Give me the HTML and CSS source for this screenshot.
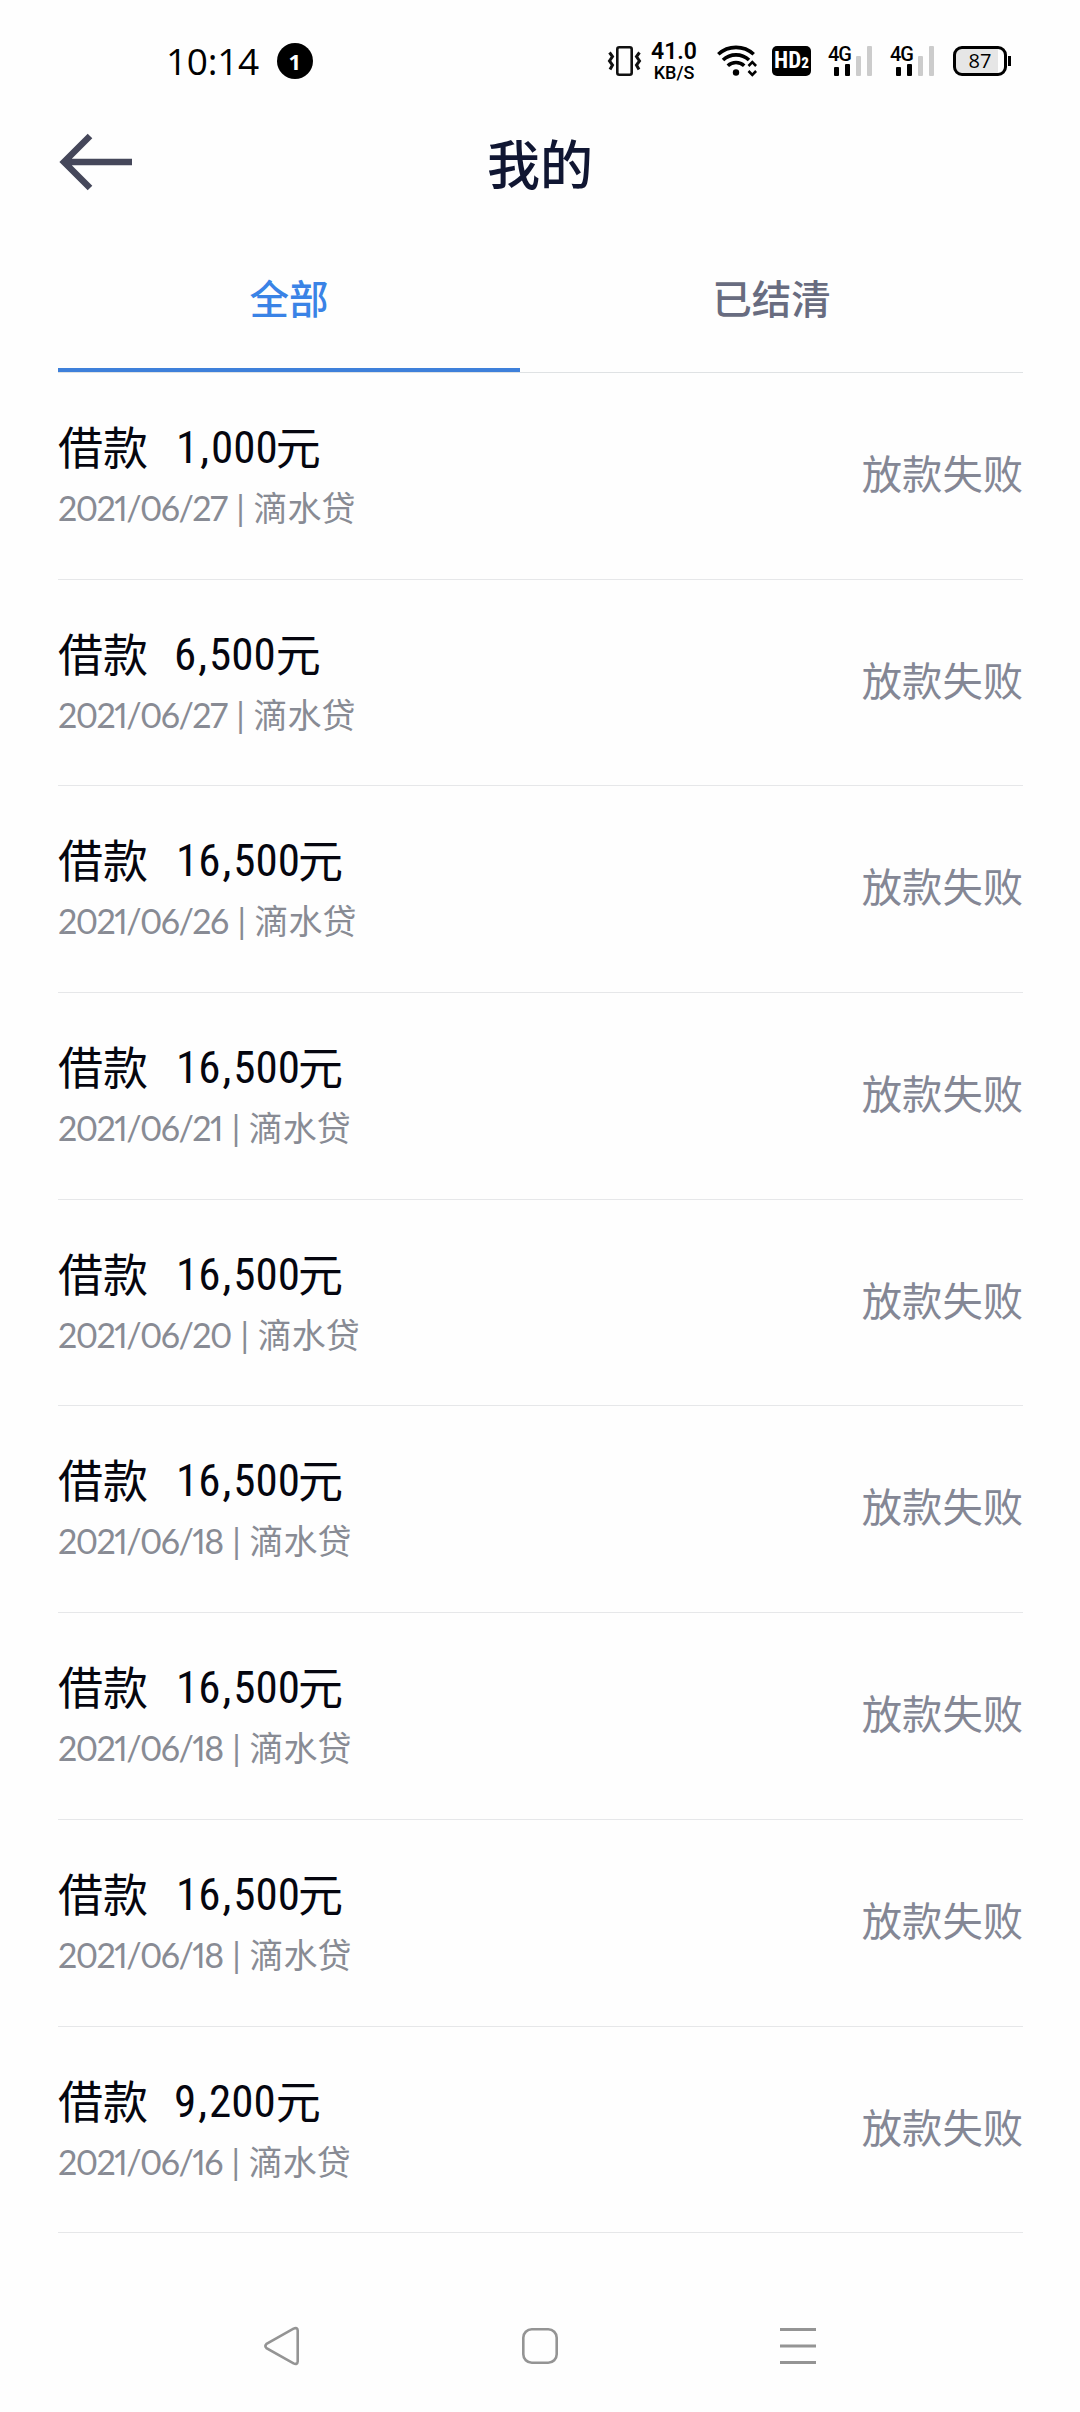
FILE: index.html
```html
<!DOCTYPE html>
<html lang="zh-CN">
<head>
    <meta charset="UTF-8">
    <meta name="viewport" content="width=device-width, initial-scale=1.0">
    <title>我的</title>
    <link rel="stylesheet" href="styles.css">
</head>
<body>
    <div class="status-bar">
        <div class="status-left">
            <span class="time">10:14</span>
            <span class="badge">1</span>
        </div>
        <div class="status-right">
            <svg class="vibrate" width="36" height="32" viewBox="0 0 36 32" fill="none" stroke="#111" stroke-width="2.6">
                <rect x="10.3" y="2.3" width="14.4" height="27.4" rx="2"/>
                <path d="M2.500 7.500l3 4-3 4.500 3 4-2.500 4.500M32.500 7.500l-3 4 3 4.500-3 4 2.500 4.500" stroke-width="3"/>
            </svg>
            <div class="speed">
                <span class="speed-num">41.0</span>
                <span class="speed-unit">KB/S</span>
            </div>
            <svg class="wifi" width="40" height="32" viewBox="0 0 40 32" fill="none" stroke="#000" stroke-width="3.6">
                <path d="M1.300 9.300a26 26 0 0 1 35.400 0M6 15a19 19 0 0 1 26 0M10.800 20.800a12 12 0 0 1 16.400 0"/>
                <circle cx="19" cy="27.500" r="3.200" fill="#000" stroke="none"/>
                <path d="M31.500 21l3.800-3.800 3.800 3.800M31.500 26l3.800 3.800 3.800-3.800" stroke-width="2.600"/>
            </svg>
            <div class="hd">HD<small>2</small></div>
            <div class="signal">
                <span class="net">4G</span>
                <i class="bar b1"></i><i class="bar b2"></i><i class="bar b3"></i><i class="bar b4"></i>
            </div>
            <div class="signal">
                <span class="net">4G</span>
                <i class="bar b1"></i><i class="bar b2"></i><i class="bar b3"></i><i class="bar b4"></i>
            </div>
            <div class="battery">87</div>
            <i class="battery-tip"></i>
        </div>
    </div>

    <header class="header">
        <svg class="back" width="74" height="58" viewBox="0 0 74 58" fill="none" stroke="#45475a" stroke-width="6.500">
            <path d="M32 3L6 29l26 26M6 29h68"/>
        </svg>
        <h1 class="title">我的</h1>
    </header>

    <nav class="tabs">
        <div class="tab active">全部</div>
        <div class="tab">已结清</div>
    </nav>

    <ul class="list">
        <li class="row">
            <div class="info">
                <div class="loan">借款<span class="num one">1<b>,</b>000</span>元</div>
                <div class="date"><span>2021/06/27</span> | 滴水贷</div>
            </div>
            <div class="state">放款失败</div>
        </li>
        <li class="row">
            <div class="info">
                <div class="loan">借款<span class="num">6<b>,</b>500</span>元</div>
                <div class="date"><span>2021/06/27</span> | 滴水贷</div>
            </div>
            <div class="state">放款失败</div>
        </li>
        <li class="row">
            <div class="info">
                <div class="loan">借款<span class="num one">16<b>,</b>500</span>元</div>
                <div class="date"><span>2021/06/26</span> | 滴水贷</div>
            </div>
            <div class="state">放款失败</div>
        </li>
        <li class="row">
            <div class="info">
                <div class="loan">借款<span class="num one">16<b>,</b>500</span>元</div>
                <div class="date"><span>2021/06/21</span> | 滴水贷</div>
            </div>
            <div class="state">放款失败</div>
        </li>
        <li class="row">
            <div class="info">
                <div class="loan">借款<span class="num one">16<b>,</b>500</span>元</div>
                <div class="date"><span>2021/06/20</span> | 滴水贷</div>
            </div>
            <div class="state">放款失败</div>
        </li>
        <li class="row">
            <div class="info">
                <div class="loan">借款<span class="num one">16<b>,</b>500</span>元</div>
                <div class="date"><span>2021/06/18</span> | 滴水贷</div>
            </div>
            <div class="state">放款失败</div>
        </li>
        <li class="row">
            <div class="info">
                <div class="loan">借款<span class="num one">16<b>,</b>500</span>元</div>
                <div class="date"><span>2021/06/18</span> | 滴水贷</div>
            </div>
            <div class="state">放款失败</div>
        </li>
        <li class="row">
            <div class="info">
                <div class="loan">借款<span class="num one">16<b>,</b>500</span>元</div>
                <div class="date"><span>2021/06/18</span> | 滴水贷</div>
            </div>
            <div class="state">放款失败</div>
        </li>
        <li class="row">
            <div class="info">
                <div class="loan">借款<span class="num">9<b>,</b>200</span>元</div>
                <div class="date"><span>2021/06/16</span> | 滴水贷</div>
            </div>
            <div class="state">放款失败</div>
        </li>
    </ul>

    <footer class="nav-bar">
        <svg width="36" height="40" viewBox="0 0 36 40" fill="none" stroke="#949494" stroke-width="2.600">
            <path d="M2.500 17.800L29.500 2.600Q33.500 1 33.700 4.500V35.500Q33.500 39 29.500 37.400L2.500 22.200Q0.300 20 2.500 17.800Z"/>
        </svg>
        <svg width="36" height="40" viewBox="0 0 36 40" fill="none" stroke="#949494" stroke-width="2.600">
            <rect x="1.300" y="3.300" width="33.400" height="33.400" rx="8.500"/>
        </svg>
        <svg width="36" height="40" viewBox="0 0 36 40" fill="none" stroke="#949494" stroke-width="3">
            <path d="M0 3.500h36M0 20h36M0 36.500h36"/>
        </svg>
    </footer>
</body>
</html>
```
FILE: styles.css
```css
* {
    box-sizing: border-box;
}
body {
    margin: 0;
    height: 2412px;
    background: #fefefe;
    font-family: "Noto Sans CJK SC", sans-serif;
    display: flex;
    flex-direction: column;
    overflow: hidden;
}

/* system status bar */
.status-bar {
    height: 122px;
    padding: 0 69px 0 166px;
    display: flex;
    align-items: center;
    justify-content: space-between;
    color: #000;
}
.status-left,
.status-right {
    display: flex;
    align-items: center;
}
.time {
    font: 37px/40px "Open Sans", sans-serif;
    letter-spacing: -0.3px;
}
.badge {
    width: 36px;
    height: 36px;
    margin-left: 18px;
    border-radius: 50%;
    background: #000;
    color: #fff;
    font: bold 22px/37px "Noto Sans", sans-serif;
    text-align: center;
}
.vibrate {
    margin-right: 7px;
}
.speed {
    width: 48px;
    padding-top: 1px;
    display: flex;
    flex-direction: column;
    align-items: center;
    font-family: Roboto, sans-serif;
}
.speed-num {
    font-size: 23px;
    line-height: 23px;
    font-weight: 600;
}
.speed-unit {
    font-size: 18px;
    line-height: 20px;
    font-weight: 500;
}
.wifi {
    margin-left: 19px;
}
.hd {
    width: 39px;
    height: 30px;
    margin-left: 15px;
    border-radius: 5px;
    background: #000;
    color: #fff;
    font: bold 23px/30px "Roboto Condensed", Roboto, sans-serif;
    font-stretch: 80%;
    text-align: center;
    white-space: nowrap;
}
.hd small {
    font-size: 15px;
    font-weight: 900;
    font-stretch: 100%;
}
.signal {
    position: relative;
    width: 45px;
    height: 30px;
    margin-left: 17px;
    padding-left: 6px;
    display: flex;
    align-items: flex-end;
    gap: 6px;
}
.net {
    position: absolute;
    left: 0;
    top: -2px;
    font: 500 20px/20px Roboto, sans-serif;
    letter-spacing: -1px;
}
.bar {
    width: 5px;
    border-radius: 1px;
    background: #ccc;
}
.b1 {
    height: 9px;
    background: #000;
}
.b2 {
    height: 12px;
    background: #000;
}
.b3 {
    height: 20px;
}
.b4 {
    height: 30px;
}
.battery {
    width: 54px;
    height: 30px;
    margin-left: 18px;
    border: 3px solid #000;
    border-radius: 9px;
    background: linear-gradient(to right, #e6e6e6 42px, #fefefe 42px);
    font: 20px/23px "Open Sans", sans-serif;
    text-align: center;
}
.battery-tip {
    width: 3px;
    height: 10px;
    margin-left: 1px;
    background: #000;
}

/* page header */
.header {
    height: 80px;
    padding: 0 58px;
    display: flex;
    align-items: center;
}
.back {
    margin-right: -74px;
}
.title {
    flex: 1;
    margin: 0;
    font-size: 53px;
    font-weight: 500;
    line-height: 80px;
    text-align: center;
    color: #101632;
}

.tabs {
    height: 171px;
    margin: 0 57px 0 58px;
    border-bottom: 1px solid #dfe2e4;
    display: flex;
}
.tab {
    flex: 1;
    padding-top: 65px;
    font-size: 39.500px;
    font-weight: 500;
    line-height: 60px;
    text-align: center;
    color: #686c80;
}
.tab.active {
    flex: 0 0 462px;
    border-bottom: 4px solid #3e80da;
    color: #3a83e6;
}

.list {
    margin: 0 57px 0 58px;
    padding: 0;
    list-style: none;
}
.row {
    height: 206.700px;
    border-bottom: 1px solid #e6e7e9;
    display: flex;
    align-items: flex-start;
    justify-content: space-between;
}
.info {
    padding-top: 40px;
}
.loan {
    font-size: 45px;
    line-height: 66px;
    color: #05060f;
    white-space: nowrap;
}
.num {
    display: inline-block;
    margin-left: 26px;
    font-family: "Roboto Condensed", Roboto, sans-serif;
    font-stretch: 82%;
    font-weight: 450;
    line-height: 50px;
    vertical-align: 2px;
}
.num.one {
    margin-left: 28px;
    margin-right: -2px;
}
.num b {
    margin: 0 2px;
    font-weight: inherit;
}
.date {
    margin-top: 4px;
    font-family: Lato, "Noto Sans CJK SC", sans-serif;
    font-size: 34px;
    font-variant-numeric: proportional-nums;
    line-height: 50px;
    color: #888b94;
    white-space: nowrap;
}
.date span {
    margin-right: 1px;
    letter-spacing: -1.550px;
}
.state {
    padding-top: 69px;
    font-size: 40.300px;
    line-height: 60px;
    color: #848795;
}

/* android navigation keys */
.nav-bar {
    margin-top: auto;
    height: 132px;
    padding: 0 264px;
    display: flex;
    align-items: center;
    justify-content: space-between;
}
```
